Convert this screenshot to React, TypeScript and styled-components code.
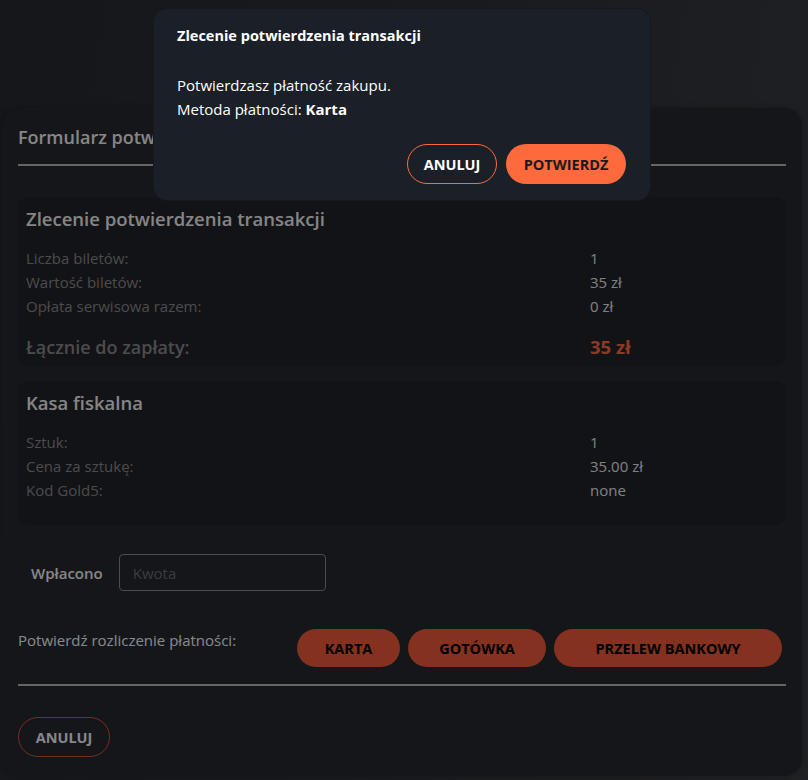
import React from "react";
import styled, { createGlobalStyle } from "styled-components";

const Global = createGlobalStyle`
  html, body { margin: 0; padding: 0; }
  body {
    font-family: "Open Sans", "Noto Sans", "Liberation Sans", sans-serif;
    background: #2a2c33;
  }
  * { box-sizing: border-box; }
`;

const Page = styled.div`
  position: relative;
  min-height: 780px;
  height: 780px;
  overflow: hidden;
  padding: 108px 6px 0 2px;
  background: linear-gradient(100deg, #282a30 0%, #2e3036 45%, #3b3d42 100%);
`;

const Panel = styled.section`
  background: #26282f;
  border-radius: 18px;
  height: 668px;
  padding: 17px 16px 19px 16px;
  display: flex;
  flex-direction: column;
  box-shadow: 0 0 6px rgba(0, 0, 0, 0.25);
`;

const PanelTitle = styled.h2`
  margin: 0;
  font-size: 18px;
  line-height: 24px;
  font-weight: 600;
  color: #f4f4f4;
`;

const Divider = styled.hr<{ $mt: number }>`
  margin: ${(p) => p.$mt}px 0 0 0;
  border: none;
  height: 2px;
  background: #b8b8b8;
`;

const Card = styled.div<{ $mt: number; $pb: number }>`
  margin-top: ${(p) => p.$mt}px;
  background: #222329;
  border-radius: 10px;
  padding: 10px 8px ${(p) => p.$pb}px 8px;
`;

const CardTitle = styled.h3`
  margin: 0 0 15px 0;
  font-size: 18.5px;
  line-height: 24px;
  font-weight: 600;
  color: #f2f2f2;
`;

const Grid = styled.div`
  display: grid;
  grid-template-columns: 3fr 1fr;
`;

const Label = styled.div<{ $big?: boolean }>`
  font-size: ${(p) => (p.$big ? 18 : 15)}px;
  line-height: 24px;
  font-weight: ${(p) => (p.$big ? 600 : 400)};
  color: #8a8a8a;
  margin-top: ${(p) => (p.$big ? 17 : 0)}px;
`;

const Value = styled.div<{ $big?: boolean }>`
  font-size: ${(p) => (p.$big ? 18.5 : 15)}px;
  line-height: 24px;
  font-weight: ${(p) => (p.$big ? 700 : 400)};
  color: ${(p) => (p.$big ? "#ff6a40" : "#e3eaf2")};
  margin-top: ${(p) => (p.$big ? 17 : 0)}px;
`;

const PaidRow = styled.div`
  margin-top: 29px;
  display: flex;
  align-items: center;
  gap: 16px;
  padding-left: 13px;
`;

const PaidLabel = styled.label`
  font-size: 15px;
  font-weight: 600;
  color: #f6f6f6;
`;

const Input = styled.input`
  width: 207px;
  height: 37px;
  background: transparent;
  border: 1px solid #8a8a8a;
  border-radius: 4px;
  padding: 0 13px;
  font-family: inherit;
  font-size: 15px;
  color: #fff;
  outline: none;
  &::placeholder { color: #6a6d74; }
`;

const PayRow = styled.div`
  margin-top: 37px;
  display: flex;
  align-items: flex-start;
  justify-content: space-between;
`;

const PayLabel = styled.div`
  font-size: 15px;
  line-height: 24px;
  color: #f6f8fa;
`;

const PayButtons = styled.div`
  display: flex;
  gap: 8px;
  margin-right: 4px;
  margin-top: 1px;
`;

const PayButton = styled.button<{ $w: number }>`
  width: ${(p) => p.$w}px;
  height: 38px;
  border: none;
  border-radius: 19px;
  background: #f05a3a;
  color: #000;
  font-family: inherit;
  font-size: 14.5px;
  font-weight: 700;
  cursor: pointer;
`;

const OutlineButton = styled.button<{ $w: number; $light?: boolean }>`
  width: ${(p) => p.$w}px;
  height: 40px;
  border-radius: 20px;
  background: transparent;
  border: 1px solid ${(p) => (p.$light ? "#ff6a3d" : "#dd5536")};
  color: ${(p) => (p.$light ? "#ffffff" : "#f2f6fa")};
  font-family: inherit;
  font-size: 14.5px;
  font-weight: 700;
  cursor: pointer;
`;

const Footer = styled.div`
  margin-top: 31px;
`;

const Overlay = styled.div`
  position: absolute;
  inset: 0;
  background: rgba(0, 0, 0, 0.45);
`;

const Modal = styled.div`
  position: absolute;
  top: 8px;
  left: 153px;
  width: 498px;
  height: 193px;
  background: #1b1f27;
  border: 1px solid #15181e;
  border-radius: 14px;
  padding: 16px 24px 16px 23px;
  display: flex;
  flex-direction: column;
  color: #fff;
`;

const ModalTitle = styled.h4`
  margin: 0;
  font-size: 14.5px;
  line-height: 22px;
  font-weight: 700;
`;

const ModalText = styled.p`
  margin: 26px 0 0 0;
  font-size: 15px;
  line-height: 24px;
  strong { font-weight: 700; }
`;

const ModalActions = styled.div`
  margin-top: auto;
  display: flex;
  justify-content: flex-end;
  gap: 9px;
`;

const ConfirmButton = styled.button`
  width: 120px;
  height: 40px;
  border-radius: 20px;
  border: none;
  background: #ff6a3d;
  color: #1a1a1a;
  font-family: inherit;
  font-size: 14.5px;
  font-weight: 700;
  cursor: pointer;
`;

export default function App() {
  return (
    <>
      <Global />
      <Page>
        <Panel>
          <PanelTitle>Formularz potwierdzenia transakcji</PanelTitle>
          <Divider $mt={15} />
          <Card $mt={31} $pb={7}>
            <CardTitle>Zlecenie potwierdzenia transakcji</CardTitle>
            <Grid>
              <Label>Liczba biletów:</Label>
              <Value>1</Value>
              <Label>Wartość biletów:</Label>
              <Value>35 zł</Value>
              <Label>Opłata serwisowa razem:</Label>
              <Value>0 zł</Value>
              <Label $big>Łącznie do zapłaty:</Label>
              <Value $big>35 zł</Value>
            </Grid>
          </Card>
          <Card $mt={15} $pb={23}>
            <CardTitle>Kasa fiskalna</CardTitle>
            <Grid>
              <Label>Sztuk:</Label>
              <Value>1</Value>
              <Label>Cena za sztukę:</Label>
              <Value>35.00 zł</Value>
              <Label>Kod Gold5:</Label>
              <Value>none</Value>
            </Grid>
          </Card>
          <PaidRow>
            <PaidLabel htmlFor="kwota">Wpłacono</PaidLabel>
            <Input id="kwota" placeholder="Kwota" />
          </PaidRow>
          <PayRow>
            <PayLabel>Potwierdź rozliczenie płatności:</PayLabel>
            <PayButtons>
              <PayButton $w={103}>KARTA</PayButton>
              <PayButton $w={138}>GOTÓWKA</PayButton>
              <PayButton $w={228}>PRZELEW BANKOWY</PayButton>
            </PayButtons>
          </PayRow>
          <Divider $mt={17} />
          <Footer>
            <OutlineButton $w={92}>ANULUJ</OutlineButton>
          </Footer>
        </Panel>
        <Overlay />
        <Modal role="dialog">
          <ModalTitle>Zlecenie potwierdzenia transakcji</ModalTitle>
          <ModalText>
            Potwierdzasz płatność zakupu.
            <br />
            Metoda płatności: <strong>Karta</strong>
          </ModalText>
          <ModalActions>
            <OutlineButton $w={90} $light>ANULUJ</OutlineButton>
            <ConfirmButton>POTWIERDŹ</ConfirmButton>
          </ModalActions>
        </Modal>
      </Page>
    </>
  );
}
